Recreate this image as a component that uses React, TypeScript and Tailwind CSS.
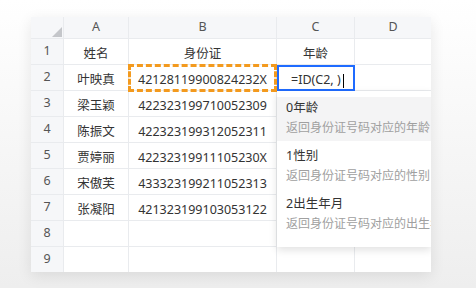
import React from 'react';

const font = { fontFamily: '"Noto Sans", "Noto Sans CJK SC", sans-serif' };

const cols = ['A', 'B', 'C', 'D'];

const rows: string[][] = [
  ['姓名', '身份证', '年龄', ''],
  ['叶映真', '42128119900824232X', '', ''],
  ['梁玉颖', '422323199710052309', '', ''],
  ['陈振文', '422323199312052311', '', ''],
  ['贾婷丽', '42232319911105230X', '', ''],
  ['宋傲芙', '433323199211052313', '', ''],
  ['张凝阳', '421323199103053122', '', ''],
  ['', '', '', ''],
  ['', '', '', ''],
];

const hints = [
  { title: '0年龄', desc: '返回身份证号码对应的年龄' },
  { title: '1性别', desc: '返回身份证号码对应的性别' },
  { title: '2出生年月', desc: '返回身份证号码对应的出生年月' },
];

const App: React.FC = () => {
  return (
    <div
      className="w-[476px] h-[288px] overflow-hidden bg-linear-to-b from-white to-[#eeeeee] pt-[17px] pl-[31px]"
      style={font}
    >
      <div className="relative w-[400px] overflow-hidden grid grid-cols-[32px_64px_147px_77px_76px] grid-rows-[21px_repeat(9,25px)] gap-px bg-[#e9ebee] shadow-[0_4px_14px_rgba(0,0,0,0.09)] text-[12.5px] text-[#333]">
        {/* header row */}
        <div className="relative bg-[#f6f7f9]">
          <div className="absolute right-px bottom-px w-0 h-0 border-l-[10px] border-l-transparent border-b-[10px] border-b-[#c4c6ca]" />
        </div>
        {cols.map((c) => (
          <div key={c} className="bg-[#f6f7f9] flex items-center justify-center text-[#555]">
            {c}
          </div>
        ))}

        {rows.map((r, i) => (
          <React.Fragment key={i}>
            <div className="bg-[#f6f7f9] flex items-center justify-center text-[#555]">{i + 1}</div>
            {r.map((v, j) => {
              if (i === 1 && j === 1) {
                return (
                  <div key={j} className="relative bg-white flex items-center justify-center pt-[6px]">
                    {v}
                    <div className="absolute -top-px -left-px -right-px -bottom-[2px] border-[3px] border-dashed border-[#f39a1e]" />
                  </div>
                );
              }
              if (i === 1 && j === 2) {
                return (
                  <div key={j} className="relative bg-white flex items-center pl-[14px] pt-[6px]">
                    <span>=ID(C2, )</span>
                    <span className="ml-[2px] w-px h-[14px] bg-black" />
                    <div className="absolute top-0 left-0 -right-px -bottom-px border-2 border-[#1f6bff]" />
                  </div>
                );
              }
              return (
                <div key={j} className="bg-white flex items-center justify-center pt-[6px]">
                  {v}
                </div>
              );
            })}
          </React.Fragment>
        ))}

        {/* formula hint popup, clipped by the sheet's right edge */}
        <div className="absolute left-[246px] top-[74px] w-[154px] h-[156px] overflow-hidden bg-white pt-[6px] shadow-[0_3px_8px_rgba(0,0,0,0.12)] flex flex-col gap-[4px]">
          {hints.map((h, k) => (
            <div
              key={k}
              className={`h-[44px] pl-[9px] pt-[1px] flex flex-col leading-[20px] whitespace-nowrap ${k === 0 ? 'bg-[#f4f4f5]' : ''}`}
            >
              <span className="text-[12.5px] text-[#333]">{h.title}</span>
              <span className="text-[12px] text-[#a0a0a0]">{h.desc}</span>
            </div>
          ))}
        </div>
      </div>
    </div>
  );
};

export default App;
